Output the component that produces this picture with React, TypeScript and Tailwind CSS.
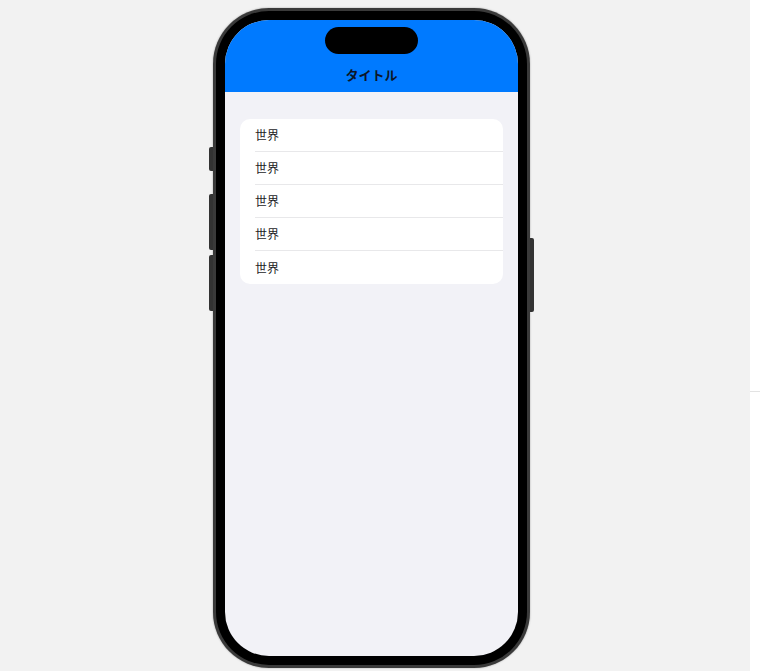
import React from "react";

export default function App() {
  const rows = ["世界", "世界", "世界", "世界", "世界"];
  return (
    <div className="flex w-[760px] h-[671px] overflow-hidden" style={{ fontFamily: '"Noto Sans CJK JP", "Noto Sans", sans-serif' }}>
      <div className="w-[750px] h-full bg-[#f2f2f2] pl-[213px] pt-[8px]">
        <div className="relative w-[317px] h-[660px]">
          {/* side buttons */}
          <div className="absolute left-[-4px] top-[139px] w-[4px] h-[24px] rounded-l-[2px] bg-[#333]" />
          <div className="absolute left-[-4px] top-[186px] w-[4px] h-[56px] rounded-l-[2px] bg-[#333]" />
          <div className="absolute left-[-4px] top-[247px] w-[4px] h-[56px] rounded-l-[2px] bg-[#333]" />
          <div className="absolute right-[-4px] top-[230px] w-[4px] h-[74px] rounded-r-[2px] bg-[#333]" />
          <div className="w-full h-full rounded-[56px] bg-[#3a3a3a] p-[3px] shadow-[0_0_2px_rgba(0,0,0,0.35)]">
            <div className="w-full h-full rounded-[53px] bg-black p-[9px]">
              <div className="w-full h-full rounded-[44px] overflow-hidden bg-[#f2f2f7] flex flex-col">
                <div className="h-[72px] bg-[#007aff] flex flex-col items-center pt-[7px]">
                  <div className="w-[93px] h-[27px] rounded-full bg-black" />
                  <div className="mt-[12px] text-[13px] leading-[18px] font-semibold text-[#0d1526]">タイトル</div>
                </div>
                <div className="px-[15px] pt-[27px]">
                  <div className="bg-white rounded-[10px] overflow-hidden">
                    {rows.map((r, i) => (
                      <div key={i} className="pl-[15px]">
                        <div className={`h-[33px] flex items-center text-[12px] text-[#1c1c1e] ${i < rows.length - 1 ? "border-b border-[#e8e8ea]" : ""}`}>
                          {r}
                        </div>
                      </div>
                    ))}
                  </div>
                </div>
              </div>
            </div>
          </div>
        </div>
      </div>
      <div className="w-[10px] h-full bg-white flex flex-col">
        <div className="h-[391px]" />
        <div className="h-px bg-[#e3e3e3]" />
      </div>
    </div>
  );
}
